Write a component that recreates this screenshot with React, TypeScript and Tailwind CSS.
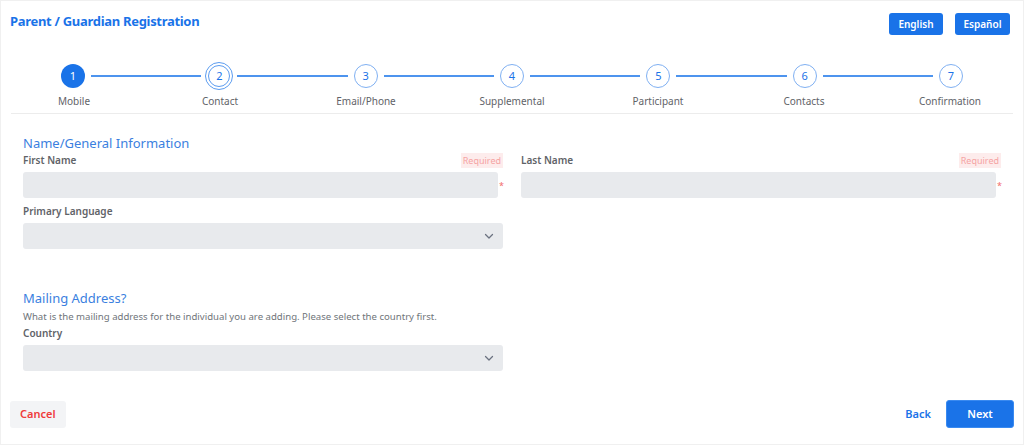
import React from "react";

const steps = ["Mobile", "Contact", "Email/Phone", "Supplemental", "Participant", "Contacts", "Confirmation"];

function Chevron() {
  return (
    <svg width="12" height="12" viewBox="0 0 24 24" fill="none" stroke="#6b7280" strokeWidth="2.5" strokeLinecap="round" strokeLinejoin="round">
      <path d="M5 9l7 7 7-7" />
    </svg>
  );
}

function Field({ label, required, select }: { label: string; required?: boolean; select?: boolean }) {
  return (
    <div className="flex flex-col">
      <div className="flex items-end justify-between h-[20px]">
        <span className="text-[10px] font-semibold text-[#5f6368] leading-none pb-[3px]">{label}</span>
        {required && (
          <span className="bg-[#fdecec] text-[#f5a3a3] text-[9px] leading-none px-[2px] py-[3px]">Required</span>
        )}
      </div>
      <div className="flex items-center mt-[4px]">
        <div className={`h-[26px] flex-1 rounded-[3px] bg-[#e8eaed] flex items-center justify-end ${select ? "pr-[8px]" : ""}`}>
          {select && <Chevron />}
        </div>
        {required && <span className="w-[4px] ml-[1px] text-[#f26b6b] text-[9px] leading-none">*</span>}
      </div>
    </div>
  );
}

export default function App() {
  return (
    <div className="w-[1024px] h-[445px] bg-white text-[#3c4043] overflow-hidden border border-[#f0f0f0]" style={{ fontFamily: '"Noto Sans", "Open Sans", sans-serif' }}>
      <div className="flex items-start justify-between pl-[9px] pr-[13px] pt-[11px]">
        <h1 className="text-[13px] font-bold text-[#1a73e8] leading-[18px] tracking-[-0.3px]">Parent / Guardian Registration</h1>
        <div className="flex gap-[12px] pt-[1px]">
          <button className="h-[22px] w-[54px] rounded-[3px] bg-[#1a73e8] text-white text-[10px] font-semibold">English</button>
          <button className="h-[22px] w-[55px] rounded-[3px] bg-[#1a73e8] text-white text-[10px] font-semibold">Español</button>
        </div>
      </div>

      <div className="mt-[27px] px-[60px] flex items-center">
        {steps.map((s, i) => (
          <React.Fragment key={s}>
            {i === 0 && (
              <div className="w-[24px] h-[24px] rounded-full bg-[#1a73e8] text-white text-[11px] flex items-center justify-center shrink-0">1</div>
            )}
            {i === 1 && (
              <div className="w-[28px] h-[28px] -mx-[2px] rounded-full border border-[#5b9cf0] p-[2px] shrink-0">
                <div className="w-full h-full rounded-full border border-[#5b9cf0] text-[#1a73e8] text-[11px] flex items-center justify-center">2</div>
              </div>
            )}
            {i > 1 && (
              <div className="w-[24px] h-[24px] rounded-full border border-[#7fb0f2] text-[#1a73e8] text-[11px] flex items-center justify-center shrink-0">{i + 1}</div>
            )}
            {i < steps.length - 1 && <div className="flex-1 h-[1.5px] bg-[#4d94ee] mx-[6px]" />}
          </React.Fragment>
        ))}
      </div>
      <div className="grid grid-cols-7 mt-[4px]">
        {steps.map((s) => (
          <div key={s} className="text-center text-[10px] text-[#5f6368] leading-[14px]">{s}</div>
        ))}
      </div>
      <div className="mx-[10px] mt-[5px] h-px bg-[#ececec]" />

      <div className="px-[22px] pt-[20px]">
        <h2 className="text-[13px] text-[#3b7fe0] leading-[18px]">Name/General Information</h2>
        <div className="grid grid-cols-2 gap-x-[18px] -mt-[4px]">
          <Field label="First Name" required />
          <Field label="Last Name" required />
        </div>
        <div className="grid grid-cols-2 gap-x-[18px] mt-[1px]">
          <Field label="Primary Language" select />
        </div>

        <h2 className="text-[13px] text-[#3b7fe0] leading-[18px] mt-[40px]">Mailing Address?</h2>
        <p className="text-[9.6px] text-[#70757a] leading-[14px] mt-[3px]">What is the mailing address for the individual you are adding. Please select the country first.</p>
        <div className="grid grid-cols-2 gap-x-[18px] -mt-[3px]">
          <Field label="Country" select />
        </div>
      </div>

      <div className="flex items-center justify-between pl-[9px] pr-[9px] mt-[29px]">
        <button className="h-[27px] px-[10px] rounded-[3px] bg-[#f3f4f6] text-[#ef3b3b] text-[11px] font-semibold">Cancel</button>
        <div className="flex items-center gap-[15px]">
          <button className="text-[#1a73e8] text-[11px] font-semibold">Back</button>
          <button className="h-[28px] w-[68px] rounded-[3px] bg-[#1a73e8] border border-[#3a8af0] text-white text-[11px] font-semibold">Next</button>
        </div>
      </div>
    </div>
  );
}
